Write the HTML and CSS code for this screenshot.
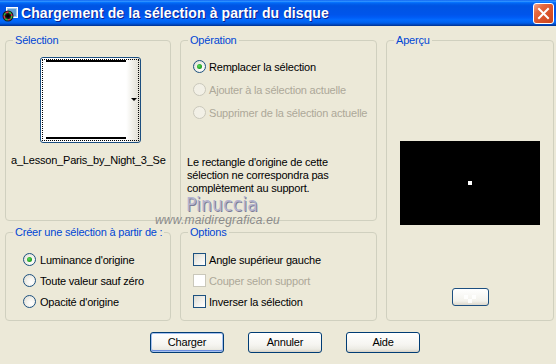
FILE: index.html
```html
<!DOCTYPE html>
<html lang="fr">
<head>
<meta charset="utf-8">
<title>Chargement de la sélection à partir du disque</title>
<link rel="stylesheet" href="styles.css">
</head>
<body>
<div class="window">
  <div class="titlebar">
    <svg class="app-icon" width="16" height="16" viewBox="0 0 16 16">
      <rect x="4.5" y="1.5" width="11" height="10" fill="#A9CDEB" stroke="#fff"/>
      <rect x="6" y="3" width="8" height="7" fill="#5E9FD6"/>
      <circle cx="6" cy="10" r="5.5" fill="#1a1a1a"/>
      <circle cx="6" cy="10" r="3.8" fill="none" stroke="#2FBF3A" stroke-width="1.4" stroke-dasharray="3 3"/>
      <circle cx="6" cy="10" r="3.8" fill="none" stroke="#D8344A" stroke-width="1.4" stroke-dasharray="3 3" stroke-dashoffset="3"/>
      <circle cx="6" cy="10" r="1.8" fill="#000"/>
    </svg>
    <span class="title">Chargement de la sélection à partir du disque</span>
    <span class="close">
      <svg width="19" height="19" viewBox="0 0 19 19"><path d="M5 5 L14 14 M14 5 L5 14" stroke="#fff" stroke-width="2" stroke-linecap="square"/></svg>
    </span>
  </div>

  <div class="content">
    <div class="groups">
      <fieldset class="group g-sel">
        <legend>Sélection</legend>
        <div class="thumb">
          <div class="focus">
            <span class="bar"></span>
            <span class="bar"></span>
          </div>
          <span class="drop-arrow"></span>
        </div>
        <div class="filename">a_Lesson_Paris_by_Night_3_Se</div>
      </fieldset>

      <fieldset class="group g-op">
        <legend>Opération</legend>
        <div class="choice-list op-list">
          <label class="choice"><span class="radio checked"></span>Remplacer la sélection</label>
          <label class="choice disabled"><span class="radio"></span>Ajouter à la sélection actuelle</label>
          <label class="choice disabled"><span class="radio"></span>Supprimer de la sélection actuelle</label>
        </div>
        <p class="note">Le rectangle d'origine de cette sélection ne correspondra pas complètement au support.</p>
      </fieldset>

      <fieldset class="group g-preview">
        <legend>Aperçu</legend>
        <div class="preview"><span class="dot"></span></div>
        <span class="mini-btn"><span class="mini-pattern"></span></span>
      </fieldset>

      <fieldset class="group g-create">
        <legend>Créer une sélection à partir de :</legend>
        <div class="choice-list small-list create-list">
          <label class="choice"><span class="radio checked"></span>Luminance d'origine</label>
          <label class="choice"><span class="radio"></span>Toute valeur sauf zéro</label>
          <label class="choice"><span class="radio"></span>Opacité d'origine</label>
        </div>
      </fieldset>

      <fieldset class="group g-options">
        <legend>Options</legend>
        <div class="choice-list small-list options-list">
          <label class="choice"><span class="check"></span>Angle supérieur gauche</label>
          <label class="choice disabled"><span class="check"></span>Couper selon support</label>
          <label class="choice"><span class="check"></span>Inverser la sélection</label>
        </div>
      </fieldset>
    </div>

    <div class="buttons">
      <span class="btn default">Charger</span>
      <span class="btn">Annuler</span>
      <span class="btn">Aide</span>
    </div>
  </div>

  <div class="watermark">
    <span class="wm-name">Pinuccia</span>
    <span class="wm-url">www.maidiregrafica.eu</span>
  </div>
</div>
</body>
</html>
```

FILE: styles.css
```css
* { box-sizing: border-box; }
html, body { margin: 0; padding: 0; }
body {
  width: 556px;
  height: 364px;
  overflow: hidden;
  background: #ECE9D8;
  font-family: "Liberation Sans", Arial, sans-serif;
  font-size: 11px;
  letter-spacing: -0.2px;
  color: #000;
}
.window {
  position: relative;
  width: 556px;
  height: 364px;
  background: #ECE9D8;
}

/* Title bar */
.titlebar {
  height: 26px;
  display: flex;
  align-items: center;
  padding: 0 2px 0 2px;
  background: linear-gradient(to bottom,
    #0058EE 0%, #3A93FF 4%, #288EFF 6%, #127DFF 8%, #036FFC 10%,
    #0262EE 14%, #0057E5 20%, #0054E3 24%, #0055EB 56%, #005BF5 66%,
    #026AFE 76%, #0062EF 86%, #0052D6 92%, #0040AB 96%, #003092 100%);
}
.app-icon { flex: none; margin-right: 3px; margin-top: 1px; }
.title {
  flex: 1;
  color: #fff;
  font-weight: bold;
  font-size: 14px;
  letter-spacing: 0.1px;
  text-shadow: 1px 1px 0 #0F1F8E;
  white-space: nowrap;
}
.close {
  flex: none;
  width: 21px;
  height: 21px;
  border: 1px solid #fff;
  border-radius: 3px;
  background: linear-gradient(135deg, #F2A58C 0%, #E5693F 28%, #D9532A 60%, #C9441C 100%);
  display: flex;
  align-items: center;
  justify-content: center;
}

/* Content */
.content { padding: 8px 0 0 5px; }
.groups {
  display: grid;
  grid-template-columns: 166px 197px 168px;
  grid-template-rows: 187px 95px;
  column-gap: 9px;
  row-gap: 5px;
}
.group {
  margin: 0;
  padding: 0;
  min-width: 0;
  border: 1px solid #D0D0BF;
  border-radius: 4px;
}
.group legend {
  margin-left: 7px;
  padding: 0 2px;
  color: #0046D5;
  line-height: 13px;
  white-space: nowrap;
}
.g-sel { grid-column: 1; grid-row: 1; }
.g-op { grid-column: 2; grid-row: 1; }
.g-preview {
  grid-column: 3; grid-row: 1 / span 2;
  display: flex; flex-direction: column; align-items: center;
}
.g-create { grid-column: 1; grid-row: 2; }
.g-options { grid-column: 2; grid-row: 2; }

/* Thumbnail */
.thumb {
  position: relative;
  width: 101px;
  height: 86px;
  margin: 10px 0 0 34px;
  border: 1px solid #1C4F80;
  border-radius: 3px;
  padding: 1px;
  background: linear-gradient(to right, #fff 0%, #fff 86%, #F1F0EA 92%, #DEDCD2 100%);
}
.focus {
  height: 100%;
  border: 1px dotted #000;
  display: flex;
  flex-direction: column;
  justify-content: space-between;
  padding: 0 12px 1px 3px;
}
.bar { display: block; height: 2px; background: #000; }
.drop-arrow {
  position: absolute;
  right: 3px;
  top: 40px;
  width: 0; height: 0;
  border-left: 3px solid transparent;
  border-right: 3px solid transparent;
  border-top: 3px solid #000;
}
.filename {
  margin: 11px 0 0 5px;
  width: 156px;
  overflow: hidden;
  white-space: nowrap;
  line-height: 13px;
}

/* Radios & checkboxes */
.choice-list { display: flex; flex-direction: column; }
.op-list { padding: 8px 0 0 12px; }
.create-list { padding: 10px 0 0 17px; }
.options-list { padding: 10px 0 0 12px; }
.choice {
  display: flex;
  align-items: center;
  gap: 3px;
  height: 23px;
  white-space: nowrap;
}
.small-list .choice { height: 21px; }
.create-list .choice { gap: 4px; }
.choice.disabled { color: #ACA899; }
.radio {
  flex: none;
  width: 13px;
  height: 13px;
  border-radius: 50%;
  border: 1px solid #1C5180;
  background: radial-gradient(circle at 65% 65%, #FFFFFF 0%, #F4F3EE 40%, #DCD9CD 100%);
  display: flex;
  align-items: center;
  justify-content: center;
}
.radio.checked::after {
  content: "";
  width: 5px;
  height: 5px;
  border-radius: 50%;
  background: radial-gradient(circle at 40% 40%, #5EDC5E 0%, #21A121 60%, #1A8A1A 100%);
}
.disabled .radio {
  border-color: #CAC8BB;
  background: #F2F0E6;
}
.check {
  flex: none;
  width: 13px;
  height: 13px;
  border: 1px solid #1C5180;
  background: linear-gradient(135deg, #DCDBD2 0%, #F0EFEA 50%, #FFFFFF 100%);
}
.disabled .check {
  border-color: #CAC8BB;
  background: #FFFFFF;
}
.note {
  margin: 32px 0 0 6px;
  width: 152px;
  line-height: 13px;
}

/* Preview */
.preview {
  margin-top: 94px;
  width: 140px;
  height: 84px;
  background: #000;
  display: flex;
  align-items: center;
  justify-content: center;
}
.dot { width: 4px; height: 4px; background: #fff; }
.mini-btn {
  margin-top: 63px;
  width: 37px;
  height: 18px;
  border: 1px solid #1C4F80;
  border-radius: 3px;
  background: linear-gradient(#FFFFFF, #F3F2EC 75%, #DCD7CB);
  display: flex;
  align-items: flex-end;
  justify-content: center;
  padding-bottom: 2px;
}
.mini-pattern {
  width: 12px;
  height: 8px;
  background:
    linear-gradient(90deg, #fff 0 4px, transparent 4px 8px, #fff 8px 12px) top / 12px 4px no-repeat,
    linear-gradient(90deg, transparent 0 4px, #fff 4px 8px, transparent 8px 12px) bottom / 12px 4px no-repeat;
  opacity: 0.9;
}

/* Buttons */
.buttons {
  display: flex;
  gap: 24px;
  margin-top: 11px;
  padding-left: 145px;
}
.btn {
  width: 74px;
  height: 21px;
  border: 1px solid #003C74;
  border-radius: 3px;
  background: linear-gradient(#FFFFFF 0%, #F6F5F1 60%, #ECEBE4 85%, #D6D0C5 100%);
  display: flex;
  align-items: center;
  justify-content: center;
  line-height: 13px;
}
.btn.default {
  box-shadow: inset 0 0 0 1px #A6C1EF, inset 0 -1px 0 1px #6C8DDD;
}

/* Watermark overlay */
.watermark {
  position: absolute;
  left: 0;
  top: 0;
  pointer-events: none;
}
.wm-name {
  position: absolute;
  left: 186px;
  top: 196px;
  font-family: "DejaVu Sans Condensed", "DejaVu Sans", sans-serif;
  font-size: 19px;
  line-height: 17px;
  letter-spacing: 0.2px;
  color: #B4B4CE;
  text-shadow: 1px 1px 0 #7C7C98;
  white-space: nowrap;
}
.wm-url {
  position: absolute;
  left: 155px;
  top: 214px;
  font-family: "Liberation Sans", Arial, sans-serif;
  font-style: italic;
  font-size: 12px;
  line-height: 12px;
  letter-spacing: 0.2px;
  color: #8A8A8A;
  white-space: nowrap;
}
```
